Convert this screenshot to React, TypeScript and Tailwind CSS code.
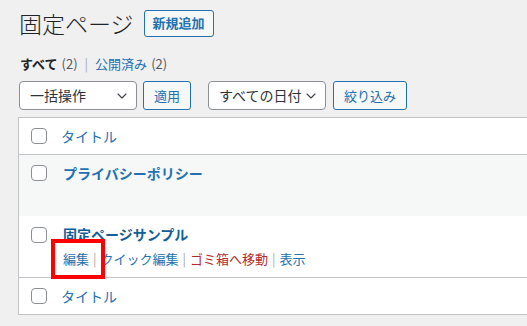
import { ChevronDown } from 'lucide-react'

function Checkbox() {
  return <span className="block w-4 h-4 shrink-0 rounded-[4px] border border-[#8c8f94] bg-white" />
}

function Select({ label, width }: { label: string; width: string }) {
  return (
    <div className={`${width} h-[29px] flex items-center justify-between pl-[10px] pr-[6px] bg-white border border-[#8c8f94] rounded-[4px] text-[14px] text-[#2c3338]`}>
      <span>{label}</span>
      <ChevronDown className="w-[16px] h-[16px] text-[#3c434a]" strokeWidth={1.6} />
    </div>
  )
}

function Button({ label, width }: { label: string; width: string }) {
  return (
    <div className={`${width} h-[29px] flex items-center justify-center bg-[#f6f7f7] border border-[#2271b1] rounded-[3px] text-[13px] text-[#2271b1]`}>
      {label}
    </div>
  )
}

export default function App() {
  return (
    <div className="relative w-[527px] h-[326px] overflow-hidden bg-[#f0f0f1] font-['Noto_Sans_CJK_JP',sans-serif] text-[#1d2327]">
      {/* Heading */}
      <div className="h-[46px] flex items-center pl-[19px] gap-[10px]">
        <h1 className="text-[23px] leading-none font-light text-[#1d2327]">固定ページ</h1>
        <div className="w-[70px] h-[27px] flex items-center justify-center border border-[#2271b1] bg-[#f6f7f7] rounded-[3px] text-[13px] font-semibold text-[#2271b1]">
          新規追加
        </div>
      </div>

      {/* Filters */}
      <div className="h-[34px] flex items-center pl-[20px] text-[13px] leading-none">
        <span className="font-bold text-[#1d2327]">すべて</span>
        <span className="ml-[4px] text-[#50575e]">(2)</span>
        <span className="mx-[7px] text-[#a7aaad]">|</span>
        <span className="text-[#2271b1]">公開済み</span>
        <span className="ml-[4px] text-[#50575e]">(2)</span>
      </div>

      {/* Bulk actions */}
      <div className="mt-[1px] flex items-center pl-[19px]">
        <Select label="一括操作" width="w-[118px]" />
        <div className="ml-[6px]"><Button label="適用" width="w-[48px]" /></div>
        <div className="ml-[17px]"><Select label="すべての日付" width="w-[118px]" /></div>
        <div className="ml-[7px]"><Button label="絞り込み" width="w-[74px]" /></div>
      </div>

      {/* Table */}
      <div className="mt-[7px] ml-[18px] w-[560px] border border-[#c3c4c7] bg-white">
        <div className="h-[37px] flex items-center pl-[12px] border-b border-[#c3c4c7]">
          <Checkbox />
          <span className="ml-[14px] text-[14px] leading-none text-[#2271b1]">タイトル</span>
        </div>

        <div className="h-[61px] bg-[#f6f7f7] flex items-start pl-[12px] pt-[10px]">
          <Checkbox />
          <span className="ml-[16px] -mt-[2px] text-[14px] leading-[20px] font-bold text-[#2271b1]">プライバシーポリシー</span>
        </div>

        <div className="h-[61px] flex items-start pl-[12px] pt-[11px]">
          <Checkbox />
          <div className="ml-[16px] -mt-[3px]">
            <div className="text-[14px] leading-[20px] font-bold text-[#135e96]">固定ページサンプル</div>
            <div className="mt-[5px] text-[13px] leading-[20px] text-[#2271b1]">
              <span>編集</span>
              <span className="mx-[4px] text-[#a7aaad]">|</span>
              <span>クイック編集</span>
              <span className="mx-[4px] text-[#a7aaad]">|</span>
              <span className="text-[#b32d2e]">ゴミ箱へ移動</span>
              <span className="mx-[4px] text-[#a7aaad]">|</span>
              <span>表示</span>
            </div>
          </div>
        </div>

        <div className="h-[37px] flex items-center pl-[12px] border-t border-[#c3c4c7]">
          <Checkbox />
          <span className="ml-[14px] text-[14px] leading-none text-[#2271b1]">タイトル</span>
        </div>
      </div>

      {/* Highlight */}
      <div className="absolute left-[51px] top-[239px] w-[54px] h-[40px] border-[4px] border-[#ff0000]" />
    </div>
  )
}
